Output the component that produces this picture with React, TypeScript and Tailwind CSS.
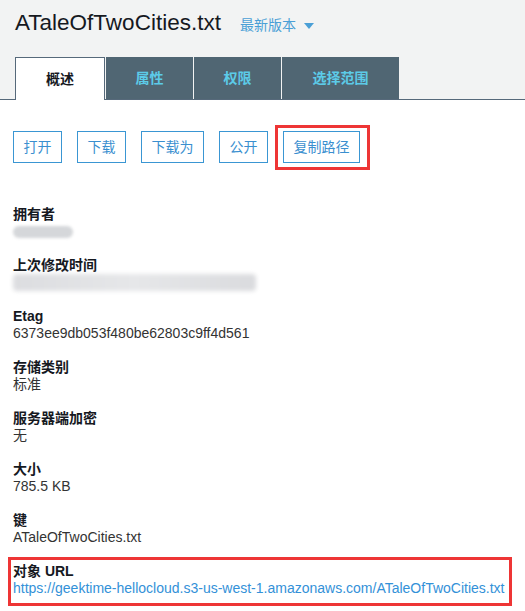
import React from 'react';

const font = { fontFamily: '"Liberation Sans", "Noto Sans CJK SC", sans-serif' };

interface Field {
  label: string;
  value?: string;
  blur?: 'short' | 'long';
  link?: boolean;
  marked?: boolean;
}

const fields: Field[] = [
  { label: '拥有者', blur: 'short' },
  { label: '上次修改时间', blur: 'long' },
  { label: 'Etag', value: '6373ee9db053f480be62803c9ff4d561' },
  { label: '存储类别', value: '标准' },
  { label: '服务器端加密', value: '无' },
  { label: '大小', value: '785.5 KB' },
  { label: '键', value: 'ATaleOfTwoCities.txt' },
  {
    label: '对象 URL',
    value: 'https://geektime-hellocloud.s3-us-west-1.amazonaws.com/ATaleOfTwoCities.txt',
    link: true,
    marked: true,
  },
];

const actions = ['打开', '下载', '下载为', '公开', '复制路径'];
const tabs = ['属性', '权限', '选择范围'];

const App: React.FC = () => {
  return (
    <div className="w-[525px] h-[611px] bg-white overflow-hidden" style={font}>
      {/* header */}
      <div className="bg-[#f2f3f3] border-b border-[#56697a] h-[100px] flex flex-col">
        <div className="flex items-baseline pl-[15px] pt-[10px] h-[57px]">
          <span className="text-[22.5px] leading-[26px] text-[#16191f]">ATaleOfTwoCities.txt</span>
          <span className="ml-[19px] text-[14px] text-[#4a9fd6] flex items-center">
            最新版本
            <span className="ml-[8px] inline-block w-0 h-0 border-l-[5px] border-r-[5px] border-t-[6px] border-l-transparent border-r-transparent border-t-[#4a9fd6]" />
          </span>
        </div>
        <div className="flex items-start pl-[15px] gap-px h-[42px]">
          <div className="w-[90px] h-[43px] bg-white border-t border-l border-r border-[#56697a] flex items-center justify-center text-[14px] font-bold text-[#16191f] relative z-10">
            概述
          </div>
          {tabs.map((t, i) => (
            <div
              key={t}
              className={`${i === 2 ? 'w-[117px]' : 'w-[87px]'} h-[42px] bg-[#506673] flex items-center justify-center text-[14px] font-bold text-[#5ccbe8]`}
            >
              {t}
            </div>
          ))}
        </div>
      </div>

      {/* actions */}
      <div className="flex pl-[13px] mt-[31px] gap-[15px]">
        {actions.map((a) => (
          <div key={a} className="relative">
            <button className="h-[32px] px-[9.5px] border border-[#3a96d3] text-[14px] text-[#3a8fcf] bg-white">
              {a}
            </button>
            {a === '复制路径' && (
              <span className="absolute left-[-8px] right-[-10px] top-[-6px] bottom-[-7px] border-[3px] border-[#ee3535]" />
            )}
          </div>
        ))}
      </div>

      {/* properties */}
      <div className="mt-[43px] pl-[13px] flex flex-col gap-[17px]">
        {fields.map((f) => (
          <div key={f.label} className="relative text-[14px] leading-[17px]">
            <div className="font-bold text-[#16191f]">{f.label}</div>
            {f.blur === 'short' && (
              <div className="h-[17px] flex items-center">
                <div className="w-[60px] h-[12px] rounded-full bg-[#d5d7da] blur-[1.5px]" />
              </div>
            )}
            {f.blur === 'long' && (
              <div className="h-[17px] flex items-center">
                <div className="w-[243px] h-[17px] rounded-sm bg-gradient-to-r from-[#dcdde0] via-[#e6e7e9] to-[#dadbde] blur-[2px]" />
              </div>
            )}
            {f.value && (
              <div className={f.link ? 'text-[#3391d8]' : 'text-[#333]'}>{f.value}</div>
            )}
            {f.marked && (
              <span className="absolute left-[-5px] right-[13px] top-[-6px] bottom-[-9px] border-[3px] border-[#ee3535]" />
            )}
          </div>
        ))}
      </div>
    </div>
  );
};

export default App;
